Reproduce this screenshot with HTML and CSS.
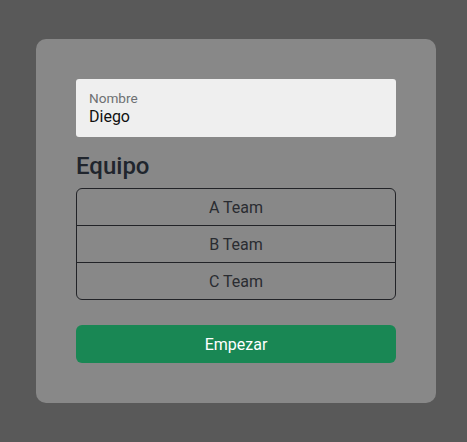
FILE: index.html
```html
<!DOCTYPE html>
<html lang="es">
<head>
<meta charset="utf-8">
<title>Equipo</title>
<link rel="stylesheet" href="styles.css">
</head>
<body>
<main class="card">
  <div class="field">
    <span class="field-label">Nombre</span>
    <span class="field-value">Diego</span>
  </div>
  <h4 class="heading">Equipo</h4>
  <div class="team-group">
    <button class="team-btn">A Team</button>
    <button class="team-btn">B Team</button>
    <button class="team-btn">C Team</button>
  </div>
  <button class="start-btn">Empezar</button>
</main>
</body>
</html>
```
FILE: styles.css
```css
html, body {
  margin: 0;
  padding: 0;
}
body {
  background: #595959;
  font-family: Roboto, "Liberation Sans", sans-serif;
  color: #212529;
  width: 467px;
  height: 442px;
  padding: 39px 0 0 36px;
  box-sizing: border-box;
}
.card {
  width: 400px;
  height: 364px;
  box-sizing: border-box;
  padding: 40px;
  background: #888888;
  border-radius: 10px;
  display: flex;
  flex-direction: column;
}
.field {
  height: 58px;
  box-sizing: border-box;
  background: #efefef;
  border-radius: 3px;
  padding: 11px 13px 0;
  display: flex;
  flex-direction: column;
}
.field-label {
  font-size: 13.6px;
  line-height: 16px;
  color: #6d6f72;
}
.field-value {
  font-size: 16px;
  line-height: 22px;
  color: #111;
}
.heading {
  margin: 15px 0 7px;
  font-size: 24px;
  line-height: 29px;
  font-weight: 500;
  color: #20252d;
}
.team-group {
  display: flex;
  flex-direction: column;
  border: 1px solid #222327;
  border-radius: 6px;
  overflow: hidden;
}
.team-btn {
  box-sizing: content-box;
  height: 36px;
  border: 0;
  border-top: 1px solid #222327;
  background: transparent;
  font-family: inherit;
  font-size: 16px;
  color: #2a2c31;
  padding: 0;
}
.team-btn:first-child {
  border-top: 0;
}
.start-btn {
  margin-top: 25px;
  height: 38px;
  border: 0;
  border-radius: 6px;
  background: #198754;
  color: #fff;
  font-family: inherit;
  font-size: 16px;
  padding: 0;
}
```
